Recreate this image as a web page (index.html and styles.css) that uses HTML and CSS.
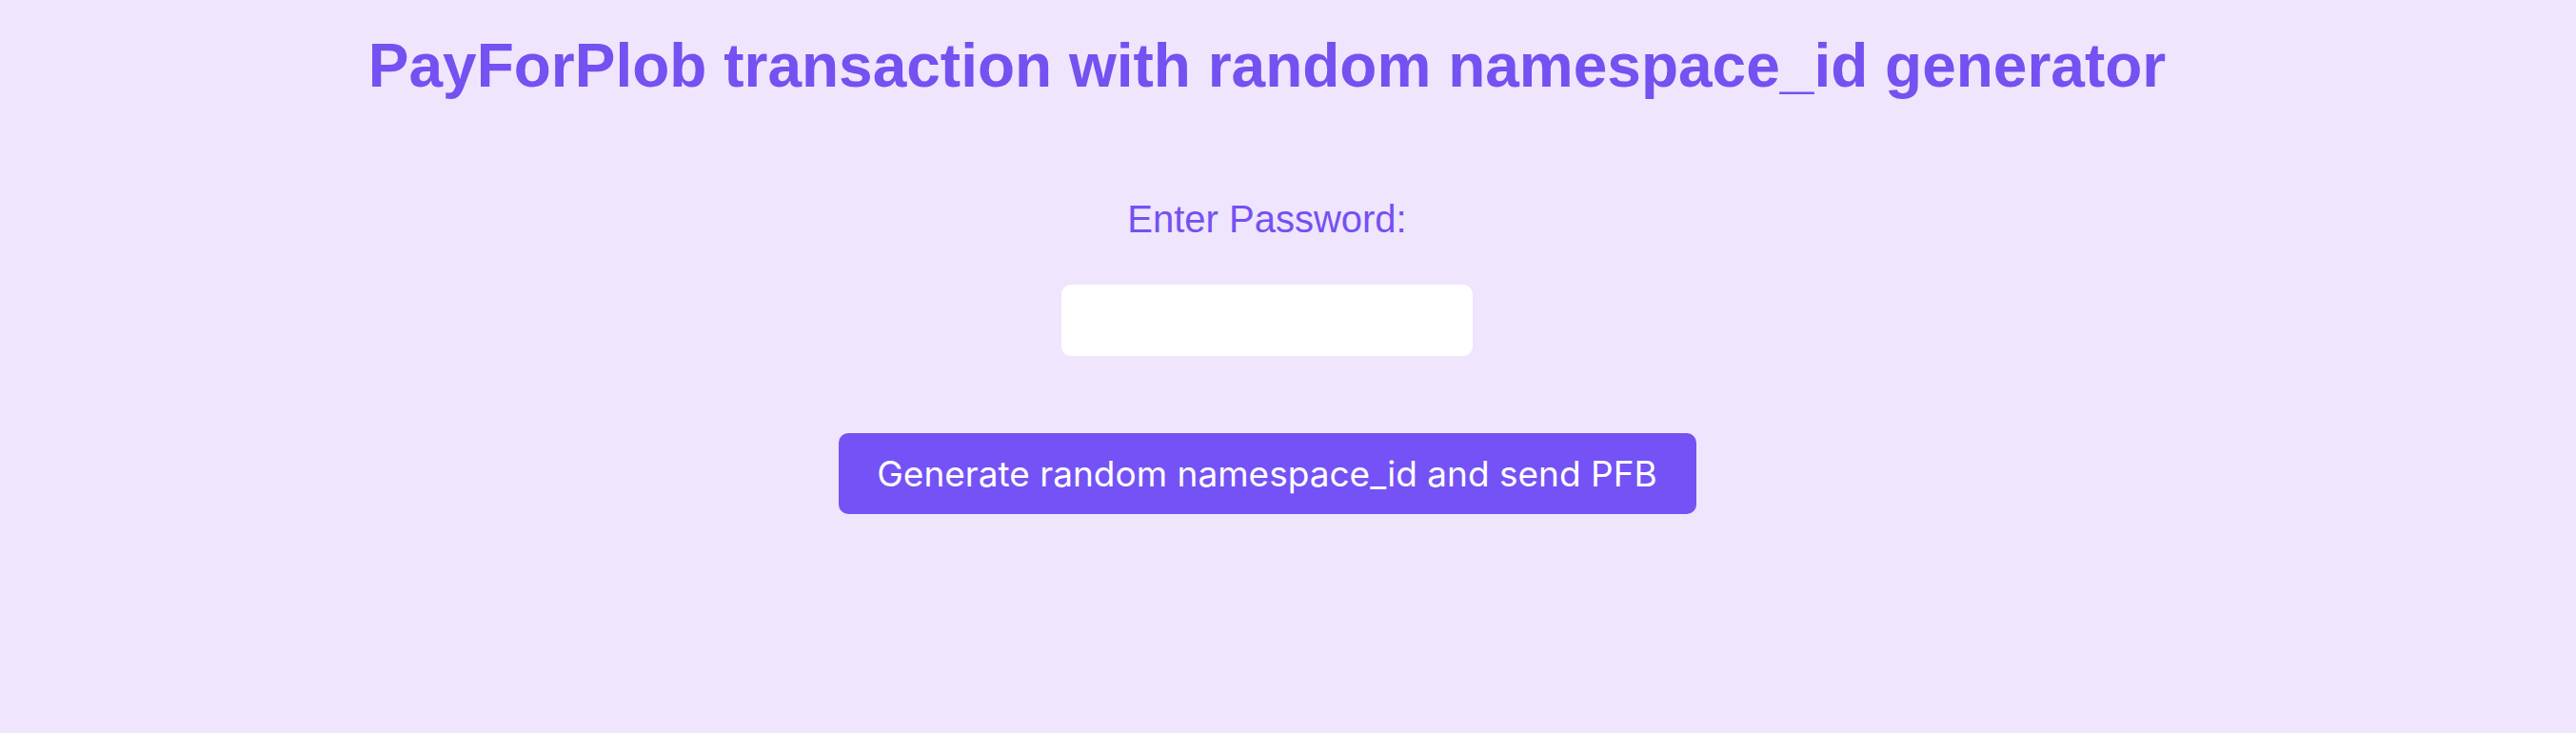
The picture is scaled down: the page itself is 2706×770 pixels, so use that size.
FILE: index.html
```html
<!DOCTYPE html>
<html lang="en">
<head>
<meta charset="utf-8">
<title>PayForPlob transaction</title>
<link rel="stylesheet" href="styles.css">
</head>
<body>
<main class="page">
  <h1 class="title">PayForPlob transaction with random namespace_id generator</h1>
  <form class="form">
    <label class="label" for="pw">Enter Password:</label>
    <input class="input" id="pw" type="password">
    <button class="btn" type="button">Generate random namespace_id and send PFB</button>
  </form>
</main>
</body>
</html>
```
FILE: styles.css
```css
html, body {
  margin: 0;
  padding: 0;
  background: #efe5fd;
  height: 100%;
}
.page {
  width: calc(100% - 44px);
  display: flex;
  flex-direction: column;
  align-items: center;
}
.title {
  margin: 32px 0 0;
  font-family: "Liberation Sans", Arial, sans-serif;
  font-weight: 700;
  font-size: 64px;
  line-height: 74px;
  color: #7451f0;
}
.form {
  display: flex;
  flex-direction: column;
  align-items: center;
  margin-top: 101px;
}
.label {
  font-family: "Liberation Sans", Arial, sans-serif;
  font-size: 40px;
  line-height: 46px;
  color: #7451f0;
}
.input {
  margin-top: 46px;
  width: 432px;
  height: 75px;
  box-sizing: border-box;
  border: none;
  border-radius: 10px;
  background: #ffffff;
  outline: none;
}
.btn {
  margin-top: 81px;
  width: 901px;
  height: 85px;
  border: none;
  border-radius: 10px;
  background: #7452f5;
  color: #ffffff;
  font-family: Inter, "Noto Sans", sans-serif;
  font-size: 37px;
  cursor: pointer;
}
```
